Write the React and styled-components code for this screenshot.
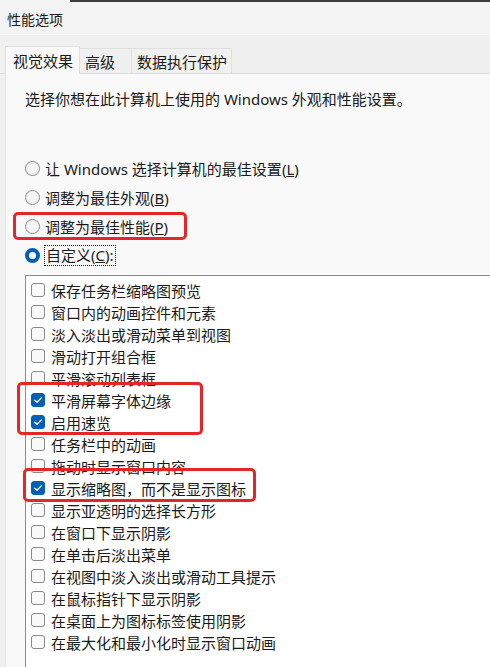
import React from "react";
import styled, { createGlobalStyle } from "styled-components";

const GlobalStyle = createGlobalStyle`
  body {
    margin: 0;
    background: #f0f0f0;
  }
`;

const radios = [
  { label: "让 Windows 选择计算机的最佳设置", key: "L" },
  { label: "调整为最佳外观", key: "B" },
  { label: "调整为最佳性能", key: "P", marked: true },
  { label: "自定义", key: "C", checked: true, focus: true },
];

const options = [
  { label: "保存任务栏缩略图预览" },
  { label: "窗口内的动画控件和元素" },
  { label: "淡入淡出或滑动菜单到视图" },
  { label: "滑动打开组合框" },
  { label: "平滑滚动列表框" },
  { label: "平滑屏幕字体边缘", checked: true, group: 1 },
  { label: "启用速览", checked: true, group: 1 },
  { label: "任务栏中的动画" },
  { label: "拖动时显示窗口内容" },
  { label: "显示缩略图，而不是显示图标", checked: true, group: 2 },
  { label: "显示亚透明的选择长方形" },
  { label: "在窗口下显示阴影" },
  { label: "在单击后淡出菜单" },
  { label: "在视图中淡入淡出或滑动工具提示" },
  { label: "在鼠标指针下显示阴影" },
  { label: "在桌面上为图标标签使用阴影" },
  { label: "在最大化和最小化时显示窗口动画" },
];

// red annotation frames, offsets from the wrapped rows
const marks = {
  radio: { left: -12, width: 174, top: 0, bottom: 1 },
  1: { left: -9, width: 186, top: -7, bottom: -2 },
  2: { left: -3, width: 233, top: -9, bottom: -3 },
};

const Mark = ({ m, children }) => (
  <Marked $left={m.left} $width={m.width} $top={m.top} $bottom={m.bottom}>
    {children}
  </Marked>
);

const CheckRow = ({ label, checked }) => (
  <Row>
    <Box $checked={checked}>
      {checked && (
        <svg width="10" height="10" viewBox="0 0 10 10">
          <path
            d="M1.8 5.2 L4 7.3 L8.3 2.9"
            fill="none"
            stroke="#fff"
            strokeWidth="1.3"
            strokeLinecap="round"
            strokeLinejoin="round"
          />
        </svg>
      )}
    </Box>
    <span>{label}</span>
  </Row>
);

const RadioItem = ({ label, hotkey, checked, focus }) => {
  const text = (
    <>
      {label}(<u>{hotkey}</u>){focus ? ":" : ""}
    </>
  );
  return (
    <RadioRow>
      <Dot $checked={checked} />
      {focus ? <Focus>{text}</Focus> : <span>{text}</span>}
    </RadioRow>
  );
};

const App = () => {
  const rows = [];
  let i = 0;
  while (i < options.length) {
    const item = options[i];
    if (item.group) {
      const members = options.filter((o) => o.group === item.group);
      rows.push(
        <Mark key={i} m={marks[item.group]}>
          {members.map((o) => (
            <CheckRow key={o.label} {...o} />
          ))}
        </Mark>
      );
      i += members.length;
    } else {
      rows.push(<CheckRow key={i} {...item} />);
      i += 1;
    }
  }

  return (
    <>
      <GlobalStyle />
      <Window>
        <TitleBar>性能选项</TitleBar>
        <TabStrip>
          <Tab $active $width={75}>视觉效果</Tab>
          <Tab $width={52}>高级</Tab>
          <Tab $width={100}>数据执行保护</Tab>
        </TabStrip>
        <Panel>
          <Description>
            选择你想在此计算机上使用的 Windows 外观和性能设置。
          </Description>
          <RadioList>
            {radios.map((r) => {
              const item = (
                <RadioItem
                  key={r.key}
                  label={r.label}
                  hotkey={r.key}
                  checked={r.checked}
                  focus={r.focus}
                />
              );
              return r.marked ? (
                <Mark key={r.key} m={marks.radio}>
                  {item}
                </Mark>
              ) : (
                item
              );
            })}
          </RadioList>
          <ListBox>{rows}</ListBox>
        </Panel>
      </Window>
    </>
  );
};

const Window = styled.div`
  width: 490px;
  height: 667px;
  overflow: hidden;
  display: flex;
  flex-direction: column;
  background: #f0f0f0;
  color: #1a1a1a;
  font-family: "Noto Sans", "Noto Sans CJK SC", sans-serif;
  font-size: 15px;
`;

const TitleBar = styled.div`
  height: 35px;
  box-sizing: border-box;
  padding: 3px 0 0 7px;
  display: flex;
  align-items: center;
  font-size: 14px;
  background: linear-gradient(to right, #f3f3f3 70px, #3c3c3c 70px) top / 100% 2px no-repeat,
    #f3f3f3;
  border-bottom: 1px solid #f8f8f8;
`;

const TabStrip = styled.div`
  height: 39px;
  box-sizing: border-box;
  display: flex;
  align-items: flex-end;
  padding-left: 5px;
  border-bottom: 1px solid #dedede;
`;

const Tab = styled.div`
  width: ${(p) => p.$width}px;
  height: ${(p) => (p.$active ? 28 : 25)}px;
  box-sizing: border-box;
  margin-bottom: ${(p) => (p.$active ? -1 : 0)}px;
  padding-left: ${(p) => (p.$active ? 7 : 5)}px;
  display: flex;
  align-items: center;
  background: ${(p) => (p.$active ? "#f9f9f9" : "#f0f0f0")};
  border: 1px solid #e0e0e0;
  border-bottom: none;
  border-left: ${(p) => (p.$active ? "1px solid #e0e0e0" : "none")};
  white-space: nowrap;
`;

const Panel = styled.div`
  flex: 1;
  display: flex;
  flex-direction: column;
  margin-left: 5px;
  padding: 15px 0 0 19px;
  background: #f9f9f9;
  border-left: 1px solid #e2e2e2;
`;

const Description = styled.div`
  line-height: 20px;
`;

const RadioList = styled.div`
  margin-top: 45px;
  display: flex;
  flex-direction: column;
`;

const RadioRow = styled.div`
  height: 29px;
  display: flex;
  align-items: center;
  gap: 5px;
  white-space: nowrap;
`;

const Dot = styled.span`
  width: 15px;
  height: 15px;
  box-sizing: border-box;
  border-radius: 50%;
  flex-shrink: 0;
  background: ${(p) => (p.$checked ? "#fff" : "#f4f4f4")};
  border: ${(p) => (p.$checked ? "4px solid #005fb8" : "1px solid #8a8a8a")};
`;

const Focus = styled.span`
  outline: 1px dotted #1a1a1a;
  line-height: 19px;
  padding: 0 1px;
`;

const Marked = styled.div`
  position: relative;
  &::after {
    content: "";
    position: absolute;
    left: ${(p) => p.$left}px;
    width: ${(p) => p.$width}px;
    top: ${(p) => p.$top}px;
    bottom: ${(p) => p.$bottom}px;
    box-sizing: border-box;
    border: 3px solid #e3262a;
    border-radius: 5px;
    pointer-events: none;
  }
`;

const ListBox = styled.div`
  flex: 1;
  margin-top: 5px;
  margin-right: -20px;
  padding-top: 3px;
  background: #fff;
  border: 1px solid #8a8a8a;
  border-bottom: none;
`;

const Row = styled.div`
  height: 22px;
  display: flex;
  align-items: center;
  gap: 6px;
  padding-left: 5px;
  white-space: nowrap;
`;

const Box = styled.span`
  width: 14px;
  height: 14px;
  box-sizing: border-box;
  flex-shrink: 0;
  border-radius: 3px;
  display: flex;
  align-items: center;
  justify-content: center;
  background: ${(p) => (p.$checked ? "#005fb8" : "#f9f9f9")};
  border: 1px solid ${(p) => (p.$checked ? "#005fb8" : "#8a8a8a")};
`;

export default App;
